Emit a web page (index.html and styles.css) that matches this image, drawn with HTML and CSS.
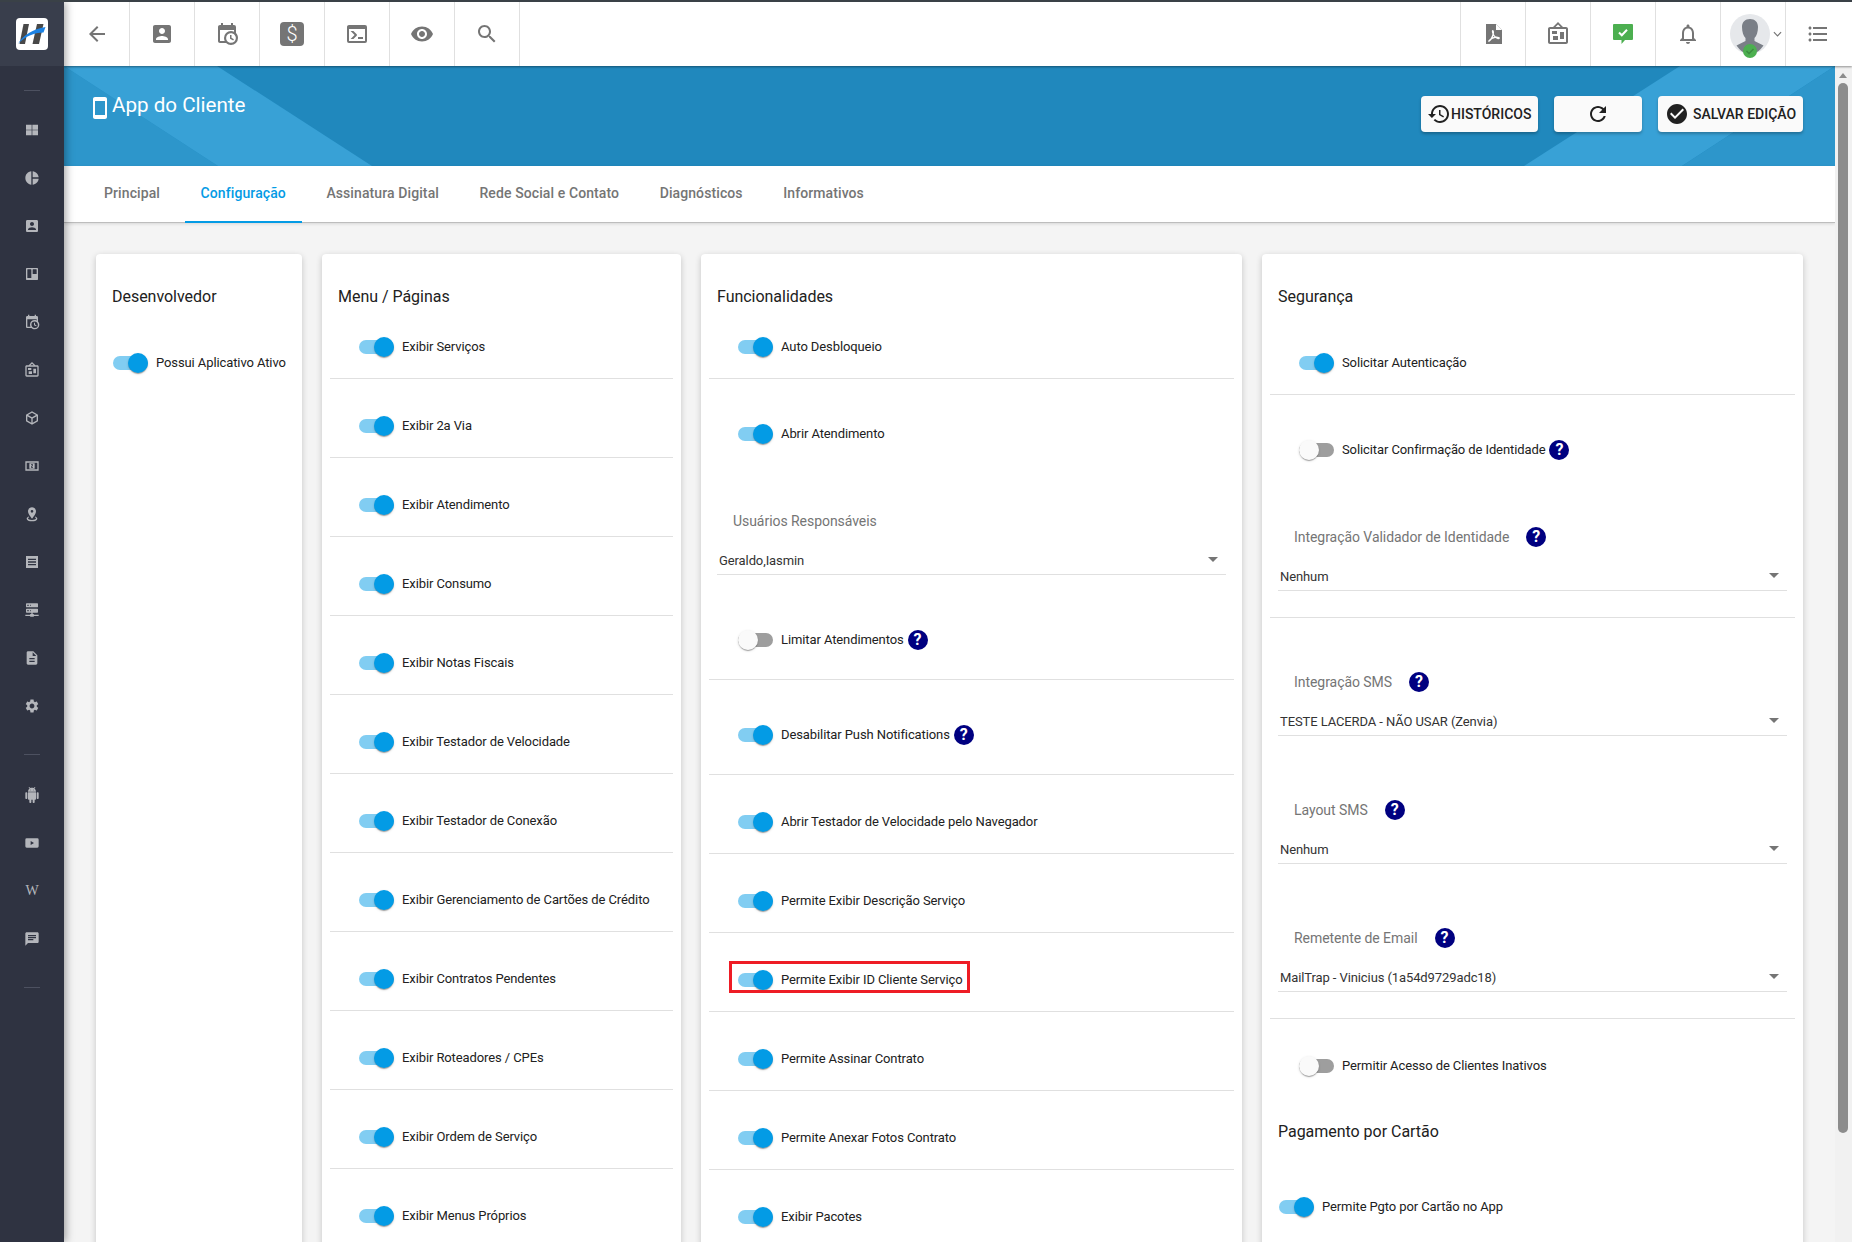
FILE: index.html
```html
<!DOCTYPE html>
<html lang="pt-BR">

<head>
  <meta charset="UTF-8">
  <meta name="viewport" content="width=device-width, initial-scale=1.0">
  <title>App do Cliente</title>
  <link rel="stylesheet" href="styles.css">
</head>

<body>
  <svg class="sprite" xmlns="http://www.w3.org/2000/svg">
    <symbol id="i-back" viewBox="0 0 24 24"><path d="M20 11H7.83l5.59-5.59L12 4l-8 8 8 8 1.41-1.41L7.83 13H20v-2z"/></symbol>
    <symbol id="i-account" viewBox="0 0 24 24"><path d="M3 5v14c0 1.1.89 2 2 2h14c1.1 0 2-.9 2-2V5c0-1.1-.9-2-2-2H5c-1.11 0-2 .9-2 2zm12 4c0 1.66-1.34 3-3 3s-3-1.34-3-3 1.34-3 3-3 3 1.34 3 3zm-9 8c0-2 4-3.1 6-3.1s6 1.1 6 3.1v1H6v-1z"/></symbol>
    <symbol id="i-calendar" viewBox="0 0 24 24"><path d="M15,13H16.5V15.82L18.94,17.23L18.19,18.53L15,16.69V13M19,8H5V19H9.67C9.24,18.09 9,17.07 9,16A7,7 0 0,1 16,9C17.07,9 18.09,9.24 19,9.67V8M5,21C3.89,21 3,20.1 3,19V5C3,3.89 3.89,3 5,3H6V1H8V3H16V1H18V3H19A2,2 0 0,1 21,5V11.1C22.24,12.36 23,14.09 23,16A7,7 0 0,1 16,23C14.09,23 12.36,22.24 11.1,21H5M16,11.15A4.85,4.85 0 0,0 11.15,16C11.15,18.68 13.32,20.85 16,20.85A4.85,4.85 0 0,0 20.85,16C20.85,13.32 18.68,11.15 16,11.15Z"/></symbol>
    <symbol id="i-console" viewBox="0 0 24 24"><path d="M20,19V7H4V19H20M20,3A2,2 0 0,1 22,5V19A2,2 0 0,1 20,21H4A2,2 0 0,1 2,19V5C2,3.89 2.9,3 4,3H20M13,17V15H18V17H13M9.58,13L5.57,9H8.4L11.7,12.3C12.09,12.69 12.09,13.33 11.7,13.72L8.42,17H5.59L9.58,13Z"/></symbol>
    <symbol id="i-eye" viewBox="0 0 24 24"><path d="M12 4.5C7 4.5 2.73 7.61 1 12c1.73 4.39 6 7.5 11 7.5s9.27-3.11 11-7.5c-1.73-4.39-6-7.5-11-7.5zM12 17c-2.76 0-5-2.24-5-5s2.24-5 5-5 5 2.24 5 5-2.24 5-5 5zm0-8c-1.66 0-3 1.34-3 3s1.34 3 3 3 3-1.34 3-3-1.34-3-3-3z"/></symbol>
    <symbol id="i-search" viewBox="0 0 24 24"><path d="M15.5 14h-.79l-.28-.27C15.41 12.59 16 11.11 16 9.5 16 5.91 13.09 3 9.5 3S3 5.91 3 9.5 5.91 16 9.5 16c1.61 0 3.09-.59 4.23-1.57l.27.28v.79l5 4.99L20.49 19l-4.99-5zm-6 0C7.01 14 5 11.99 5 9.5S7.01 5 9.5 5 14 7.01 14 9.5 11.99 14 9.5 14z"/></symbol>
    <symbol id="i-board" viewBox="0 0 24 24"><path d="M12.04 2.5L9.53 5H14.53L12.04 2.5M4 7V20H20V7H4M12 0L17 5V5H20C21.1 5 22 5.89 22 7V20C22 21.1 21.1 22 20 22H4C2.89 22 2 21.1 2 20V7C2 5.89 2.89 5 4 5H7V5L12 0M7 18V14H12V18H7M14 17V10H18V17H14M6 12V9H11V12H6Z"/></symbol>
    <symbol id="i-bell" viewBox="0 0 24 24"><path d="M12 22c1.1 0 2-.9 2-2h-4c0 1.1.9 2 2 2zm6-6v-5c0-3.07-1.63-5.64-4.5-6.32V4c0-.83-.67-1.5-1.5-1.5s-1.5.67-1.5 1.5v.68C7.64 5.36 6 7.92 6 11v5l-2 2v1h16v-1l-2-2zm-2 1H8v-6c0-2.48 1.51-4.5 4-4.5s4 2.02 4 4.5v6z"/></symbol>
    <symbol id="i-list" viewBox="0 0 24 24"><path d="M4 10.5c-.83 0-1.5.67-1.5 1.5s.67 1.5 1.5 1.5 1.5-.67 1.5-1.5-.67-1.5-1.5-1.5zm0-6c-.83 0-1.5.67-1.5 1.5S3.17 7.5 4 7.5 5.5 6.83 5.5 6 4.83 4.5 4 4.5zm0 12c-.83 0-1.5.68-1.5 1.5s.68 1.5 1.5 1.5 1.5-.68 1.5-1.5-.67-1.5-1.5-1.5zM7 19h14v-2H7v2zm0-6h14v-2H7v2zm0-8v2h14V5H7z"/></symbol>
    <symbol id="i-phone" viewBox="0 0 24 24"><path d="M17 1.01L7 1c-1.1 0-2 .9-2 2v18c0 1.1.9 2 2 2h10c1.1 0 2-.9 2-2V3c0-1.1-.9-1.99-2-1.99zM17 19H7V5h10v14z"/></symbol>
    <symbol id="i-history" viewBox="0 0 24 24"><path d="M13 3c-4.97 0-9 4.03-9 9H1l3.89 3.89.07.14L9 12H6c0-3.87 3.13-7 7-7s7 3.13 7 7-3.13 7-7 7c-1.93 0-3.68-.79-4.94-2.06l-1.42 1.42C8.27 19.99 10.51 21 13 21c4.97 0 9-4.03 9-9s-4.03-9-9-9zm-1 5v5l4.28 2.54.72-1.21-3.5-2.08V8H12z"/></symbol>
    <symbol id="i-refresh" viewBox="0 0 24 24"><path d="M17.65 6.35C16.2 4.9 14.21 4 12 4c-4.42 0-7.99 3.58-7.99 8s3.57 8 7.99 8c3.73 0 6.84-2.55 7.73-6h-2.08c-.82 2.33-3.04 4-5.65 4-3.31 0-6-2.69-6-6s2.69-6 6-6c1.66 0 3.14.69 4.22 1.78L13 11h7V4l-2.35 2.35z"/></symbol>
    <symbol id="i-check" viewBox="0 0 24 24"><path d="M12 2C6.48 2 2 6.48 2 12s4.48 10 10 10 10-4.48 10-10S17.52 2 12 2zm-2 15l-5-5 1.41-1.41L10 14.17l7.59-7.59L19 8l-9 9z"/></symbol>
    <symbol id="i-grid" viewBox="0 0 24 24"><path d="M3 4h8.5v7.5H3zM12.500 4H21v7.500h-8.500zM3 12.500h8.500V20H3zM12.500 12.500H21V20h-8.500z"/></symbol>
    <symbol id="i-pie" viewBox="0 0 24 24"><path d="M11,2V22C5.9,21.5 2,17.2 2,12C2,6.8 5.9,2.5 11,2M13,2V11H22C21.5,6.2 17.8,2.5 13,2M13,13V22C17.7,21.5 21.5,17.8 22,13H13Z"/></symbol>
    <symbol id="i-trello" viewBox="0 0 24 24"><path d="M4,3H20A1,1 0 0,1 21,4V20A1,1 0 0,1 20,21H4A1,1 0 0,1 3,20V4A1,1 0 0,1 4,3M5.5,5A0.5,0.5 0 0,0 5,5.5V17.5A0.5,0.5 0 0,0 5.5,18H10.5A0.5,0.5 0 0,0 11,17.5V5.5A0.5,0.5 0 0,0 10.5,5H5.5M13.5,5A0.5,0.5 0 0,0 13,5.5V11.5A0.5,0.5 0 0,0 13.5,12H18.5A0.5,0.5 0 0,0 19,11.5V5.5A0.5,0.5 0 0,0 18.5,5H13.5Z"/></symbol>
    <symbol id="i-cube" viewBox="0 0 24 24"><path d="M21,16.5C21,16.88 20.79,17.21 20.47,17.38L12.57,21.82C12.41,21.94 12.21,22 12,22C11.79,22 11.59,21.94 11.43,21.82L3.53,17.38C3.21,17.21 3,16.88 3,16.5V7.5C3,7.12 3.21,6.79 3.53,6.62L11.43,2.18C11.59,2.06 11.79,2 12,2C12.21,2 12.41,2.06 12.57,2.18L20.47,6.62C20.79,6.79 21,7.12 21,7.5V16.5M12,4.15L6.04,7.5L12,10.85L17.96,7.5L12,4.15M5,15.91L11,19.29V12.58L5,9.21V15.91M19,15.91V9.21L13,12.58V19.29L19,15.91Z"/></symbol>
    <symbol id="i-cash" viewBox="0 0 24 24"><path fill-rule="evenodd" d="M2 5h20v14H2zM4 7v10h16V7z"/><path fill-rule="evenodd" d="M8 8h8v8H8zM10.500 9.500v1h2v1h-2v3h3v-1h-2v-1h2v-3z"/></symbol>
    <symbol id="i-marker" viewBox="0 0 24 24"><path d="M12,2C15.31,2 18,4.66 18,7.95C18,12.41 12,19 12,19C12,19 6,12.41 6,7.95C6,4.66 8.69,2 12,2M12,6A2,2 0 0,0 10,8A2,2 0 0,0 12,10A2,2 0 0,0 14,8A2,2 0 0,0 12,6M20,19C20,21.21 16.42,23 12,23C7.58,23 4,21.21 4,19C4,17.71 5.22,16.56 7.11,15.83L7.75,16.74C6.67,17.19 6,17.81 6,18.5C6,19.88 8.69,21 12,21C15.31,21 18,19.88 18,18.5C18,17.81 17.33,17.19 16.25,16.74L16.89,15.83C18.78,16.56 20,17.71 20,19Z"/></symbol>
    <symbol id="i-article" viewBox="0 0 24 24"><path fill-rule="evenodd" d="M3 3h18v18H3zM6 7v2h12V7zM6 11v2h12v-2zM6 15v2h12v-2z"/></symbol>
    <symbol id="i-server" viewBox="0 0 24 24"><path d="M13,18H14A1,1 0 0,1 15,19H22V21H15A1,1 0 0,1 14,22H10A1,1 0 0,1 9,21H2V19H9A1,1 0 0,1 10,18H11V16H4A1,1 0 0,1 3,15V11A1,1 0 0,1 4,10H20A1,1 0 0,1 21,11V15A1,1 0 0,1 20,16H13V18M4,2H20A1,1 0 0,1 21,3V7A1,1 0 0,1 20,8H4A1,1 0 0,1 3,7V3A1,1 0 0,1 4,2M9,6H10V4H9V6M9,14H10V12H9V14M5,4V6H7V4H5M5,12V14H7V12H5Z"/></symbol>
    <symbol id="i-file" viewBox="0 0 24 24"><path d="M14 2H6c-1.1 0-1.99.9-1.99 2L4 20c0 1.1.89 2 1.99 2H18c1.1 0 2-.9 2-2V8l-6-6zm2 16H8v-2h8v2zm0-4H8v-2h8v2zm-3-5V3.500L18.500 9H13z"/></symbol>
    <symbol id="i-gear" viewBox="0 0 24 24"><path d="M19.14 12.94c.04-.3.06-.61.06-.94 0-.32-.02-.64-.07-.94l2.03-1.58c.18-.14.23-.41.12-.61l-1.92-3.32c-.12-.22-.37-.29-.59-.22l-2.39.96c-.5-.38-1.03-.7-1.62-.94l-.36-2.54c-.04-.24-.24-.41-.48-.41h-3.84c-.24 0-.43.17-.47.41l-.36 2.54c-.59.24-1.13.57-1.62.94l-2.39-.96c-.22-.08-.47 0-.59.22L2.74 8.87c-.12.21-.08.47.12.61l2.03 1.58c-.05.3-.09.63-.09.94s.02.64.07.94l-2.03 1.58c-.18.14-.23.41-.12.61l1.92 3.32c.12.22.37.29.59.22l2.39-.96c.5.38 1.03.7 1.62.94l.36 2.54c.05.24.24.41.48.41h3.84c.24 0 .44-.17.47-.41l.36-2.54c.59-.24 1.13-.56 1.62-.94l2.39.96c.22.08.47 0 .59-.22l1.92-3.32c.12-.22.07-.47-.12-.61l-2.01-1.58zM12 15.600c-1.98 0-3.6-1.62-3.6-3.6s1.62-3.6 3.6-3.6 3.6 1.62 3.6 3.6-1.62 3.6-3.6 3.6z"/></symbol>
    <symbol id="i-android" viewBox="0 0 24 24"><path d="M6 18c0 .55.45 1 1 1h1v3.500c0 .83.67 1.500 1.500 1.500s1.500-.67 1.500-1.500V19h2v3.500c0 .83.67 1.500 1.500 1.500s1.500-.67 1.500-1.500V19h1c.55 0 1-.45 1-1V8H6v10zM3.500 8C2.670 8 2 8.670 2 9.500v7c0 .83.67 1.500 1.500 1.500S5 17.330 5 16.500v-7C5 8.670 4.330 8 3.500 8zm17 0c-.83 0-1.500.67-1.500 1.500v7c0 .83.67 1.500 1.500 1.500s1.500-.67 1.500-1.500v-7c0-.83-.67-1.500-1.500-1.500zm-4.970-5.840l1.300-1.300c.2-.2.2-.51 0-.71-.2-.2-.51-.2-.71 0l-1.480 1.480C13.850 1.230 12.950 1 12 1c-.96 0-1.860.23-2.660.63L7.850.15c-.2-.2-.51-.2-.71 0-.2.2-.2.51 0 .71l1.310 1.310C6.970 3.260 6 5.010 6 7h12c0-1.990-.97-3.750-2.470-4.840zM10 5H9V4h1v1zm5 0h-1V4h1v1z"/></symbol>
    <symbol id="i-video" viewBox="0 0 24 24"><path fill-rule="evenodd" d="M4 5h16a2 2 0 0 1 2 2v10a2 2 0 0 1-2 2H4a2 2 0 0 1-2-2V7a2 2 0 0 1 2-2zM10 9v6l5-3z"/></symbol>
    <symbol id="i-message" viewBox="0 0 24 24"><path d="M20 2H4c-1.100 0-1.990.9-1.990 2L2 22l4-4h14c1.100 0 2-.9 2-2V4c0-1.100-.9-2-2-2zM6 9h12v2H6V9zm8 5H6v-2h8v2zm4-6H6V6h12v2z"/></symbol>
  </svg>

  <div class="app">
    <aside class="sidebar">
      <div class="brand">
        <svg class="logo" viewBox="0 0 32 32">
          <rect width="32" height="32" rx="4" fill="#fff"/>
          <path d="M7.500 6H13L9 26H3.500z" fill="#484848"/>
          <path d="M21 6h6.500L23 26h-6.500z" fill="#484848"/>
          <path d="M2 26C7 17 17 11 29.500 9L27.500 14.500C18 14.500 9 18.500 2 26z" fill="#1b82e4"/>
        </svg>
      </div>
      <div class="side-line"></div>
      <nav class="side-nav">
        <a class="side-item"><svg class="side-icon"><use href="#i-grid"/></svg></a>
        <a class="side-item"><svg class="side-icon"><use href="#i-pie"/></svg></a>
        <a class="side-item"><svg class="side-icon"><use href="#i-account"/></svg></a>
        <a class="side-item"><svg class="side-icon"><use href="#i-trello"/></svg></a>
        <a class="side-item"><svg class="side-icon"><use href="#i-calendar"/></svg></a>
        <a class="side-item"><svg class="side-icon"><use href="#i-board"/></svg></a>
        <a class="side-item"><svg class="side-icon"><use href="#i-cube"/></svg></a>
        <a class="side-item"><svg class="side-icon"><use href="#i-cash"/></svg></a>
        <a class="side-item"><svg class="side-icon"><use href="#i-marker"/></svg></a>
        <a class="side-item"><svg class="side-icon"><use href="#i-article"/></svg></a>
        <a class="side-item"><svg class="side-icon"><use href="#i-server"/></svg></a>
        <a class="side-item"><svg class="side-icon"><use href="#i-file"/></svg></a>
        <a class="side-item"><svg class="side-icon"><use href="#i-gear"/></svg></a>
      </nav>
      <div class="side-line"></div>
      <nav class="side-nav">
        <a class="side-item"><svg class="side-icon"><use href="#i-android"/></svg></a>
        <a class="side-item"><svg class="side-icon"><use href="#i-video"/></svg></a>
        <a class="side-item"><span class="side-w">W</span></a>
        <a class="side-item"><svg class="side-icon"><use href="#i-message"/></svg></a>
      </nav>
      <div class="side-line"></div>
    </aside>

    <div class="main">
      <header class="topbar">
        <div class="tools">
          <a class="tool"><svg class="tool-icon"><use href="#i-back"/></svg></a>
          <a class="tool"><svg class="tool-icon"><use href="#i-account"/></svg></a>
          <a class="tool"><svg class="tool-icon"><use href="#i-calendar"/></svg></a>
          <a class="tool"><span class="money">$</span></a>
          <a class="tool"><svg class="tool-icon"><use href="#i-console"/></svg></a>
          <a class="tool"><svg class="tool-icon"><use href="#i-eye"/></svg></a>
          <a class="tool"><svg class="tool-icon"><use href="#i-search"/></svg></a>
        </div>
        <div class="tools tools-right">
          <a class="tool">
            <svg class="tool-icon" viewBox="0 0 24 24">
              <path d="M5 2h10l6 6v14H5z"/>
              <path d="M15 2l6 6h-6z" fill="#fff"/>
              <path d="M7.500 19.500c2.500-1.500 4-4.500 4.700-7.500.4-2 0-3.500-.5-3.300-.6.3 0 3 1.600 5.300 1.300 1.800 3.200 2.800 4.700 2.300.8-.4-.8-1.400-3.200-1.100-2.600.3-5.300 1.800-7.300 4.300z" fill="none" stroke="#fff" stroke-width="1.300"/>
            </svg>
          </a>
          <a class="tool"><svg class="tool-icon"><use href="#i-board"/></svg></a>
          <a class="tool">
            <svg class="tool-icon" viewBox="0 0 24 24">
              <path d="M3 2h18a1 1 0 0 1 1 1v14a1 1 0 0 1-1 1h-7l-3.500 4v-4H3a1 1 0 0 1-1-1V3a1 1 0 0 1 1-1z" fill="#4caf50"/>
              <path d="M8 10.500l2.800 2.800 5.200-5.600" fill="none" stroke="#fff" stroke-width="2"/>
            </svg>
          </a>
          <a class="tool"><svg class="tool-icon"><use href="#i-bell"/></svg></a>
          <a class="tool tool-user">
            <svg class="avatar" viewBox="0 0 40 46">
              <circle cx="20" cy="20" r="20" fill="#e6e8eb"/>
              <path d="M20 5c5 0 8 3 8 8 0 5-1.500 9-3.500 11v3l9 4.500C30 36.500 25.500 40 20 40s-10-3.500-13.500-8.500l9-4.500v-3C13.500 22 12 18 12 13c0-5 3-8 8-8z" fill="#7a7f87"/>
              <circle cx="20" cy="37" r="7" fill="#4caf50"/>
              <path d="M16.500 37l2.500 2.500 4.500-4.500" fill="none" stroke="#3d8c41" stroke-width="1.500"/>
            </svg>
            <svg class="chevron" viewBox="0 0 10 6"><path d="M1 1l4 4 4-4" fill="none" stroke="#757575" stroke-width="1.300"/></svg>
          </a>
          <a class="tool tool-last"><svg class="tool-icon"><use href="#i-list"/></svg></a>
        </div>
      </header>

      <div class="body">
        <div class="page">
          <section class="hero">
            <svg class="hero-bg" viewBox="0 0 1771 100" preserveAspectRatio="none">
              <path d="M0 0L154 100H0z" fill="#2d96cb"/>
              <path d="M0 0H153L308 100H154z" fill="#38a1d6"/>
              <path d="M1460 100L1616 0H1771L1618 100z" fill="#38a1d6"/>
              <path d="M1618 100L1771 0V100z" fill="#2d96cb"/>
            </svg>
            <h1 class="hero-title"><svg class="phone"><use href="#i-phone"/></svg>App do Cliente</h1>
            <div class="hero-actions">
              <button class="btn btn-history"><svg class="btn-icon"><use href="#i-history"/></svg>HISTÓRICOS</button>
              <button class="btn btn-refresh"><svg class="btn-icon"><use href="#i-refresh"/></svg></button>
              <button class="btn btn-save"><svg class="btn-icon"><use href="#i-check"/></svg>SALVAR EDIÇÃO</button>
            </div>
          </section>

          <nav class="tabs">
            <a class="tab">Principal</a>
            <a class="tab active">Configuração</a>
            <a class="tab">Assinatura Digital</a>
            <a class="tab">Rede Social e Contato</a>
            <a class="tab">Diagnósticos</a>
            <a class="tab">Informativos</a>
          </nav>

          <main class="content">
            <section class="card">
              <h2 class="card-title">Desenvolvedor</h2>
              <div class="row row-top row-wide plain">
                <label class="switch"><span class="toggle on"></span>Possui Aplicativo Ativo</label>
              </div>
            </section>

            <section class="card">
              <h2 class="card-title">Menu / Páginas</h2>
              <div class="row row-first"><label class="switch"><span class="toggle on"></span>Exibir Serviços</label></div>
              <div class="row"><label class="switch"><span class="toggle on"></span>Exibir 2a Via</label></div>
              <div class="row"><label class="switch"><span class="toggle on"></span>Exibir Atendimento</label></div>
              <div class="row"><label class="switch"><span class="toggle on"></span>Exibir Consumo</label></div>
              <div class="row"><label class="switch"><span class="toggle on"></span>Exibir Notas Fiscais</label></div>
              <div class="row"><label class="switch"><span class="toggle on"></span>Exibir Testador de Velocidade</label></div>
              <div class="row"><label class="switch"><span class="toggle on"></span>Exibir Testador de Conexão</label></div>
              <div class="row"><label class="switch"><span class="toggle on"></span>Exibir Gerenciamento de Cartões de Crédito</label></div>
              <div class="row"><label class="switch"><span class="toggle on"></span>Exibir Contratos Pendentes</label></div>
              <div class="row"><label class="switch"><span class="toggle on"></span>Exibir Roteadores / CPEs</label></div>
              <div class="row"><label class="switch"><span class="toggle on"></span>Exibir Ordem de Serviço</label></div>
              <div class="row"><label class="switch"><span class="toggle on"></span>Exibir Menus Próprios</label></div>
            </section>

            <section class="card">
              <h2 class="card-title">Funcionalidades</h2>
              <div class="row row-first"><label class="switch"><span class="toggle on"></span>Auto Desbloqueio</label></div>
              <div class="row row-tall plain"><label class="switch"><span class="toggle on"></span>Abrir Atendimento</label></div>
              <div class="field field-plain">
                <div class="field-label">Usuários Responsáveis</div>
                <div class="select">Geraldo,Iasmin</div>
              </div>
              <div class="row row-tall row-after-field"><label class="switch"><span class="toggle"></span>Limitar Atendimentos<span class="help">?</span></label></div>
              <div class="row row-tall"><label class="switch"><span class="toggle on"></span>Desabilitar Push Notifications<span class="help">?</span></label></div>
              <div class="row"><label class="switch"><span class="toggle on"></span>Abrir Testador de Velocidade pelo Navegador</label></div>
              <div class="row"><label class="switch"><span class="toggle on"></span>Permite Exibir Descrição Serviço</label></div>
              <div class="row"><label class="switch marked"><span class="toggle on"></span>Permite Exibir ID Cliente Serviço</label></div>
              <div class="row"><label class="switch"><span class="toggle on"></span>Permite Assinar Contrato</label></div>
              <div class="row"><label class="switch"><span class="toggle on"></span>Permite Anexar Fotos Contrato</label></div>
              <div class="row"><label class="switch"><span class="toggle on"></span>Exibir Pacotes</label></div>
            </section>

            <section class="card">
              <h2 class="card-title">Segurança</h2>
              <div class="row row-top"><label class="switch"><span class="toggle on"></span>Solicitar Autenticação</label></div>
              <div class="row row-tall plain"><label class="switch"><span class="toggle"></span>Solicitar Confirmação de Identidade<span class="help">?</span></label></div>
              <div class="field">
                <div class="field-label">Integração Validador de Identidade<span class="help">?</span></div>
                <div class="select">Nenhum</div>
              </div>
              <div class="field field-plain field-sms">
                <div class="field-label">Integração SMS<span class="help">?</span></div>
                <div class="select">TESTE LACERDA - NÃO USAR (Zenvia)</div>
              </div>
              <div class="field field-plain field-next">
                <div class="field-label">Layout SMS<span class="help">?</span></div>
                <div class="select">Nenhum</div>
              </div>
              <div class="field field-next">
                <div class="field-label">Remetente de Email<span class="help">?</span></div>
                <div class="select">MailTrap - Vinicius (1a54d9729adc18)</div>
              </div>
              <div class="row plain"><label class="switch"><span class="toggle"></span>Permitir Acesso de Clientes Inativos</label></div>
              <h2 class="card-title card-subtitle">Pagamento por Cartão</h2>
              <div class="row row-wide row-pay plain"><label class="switch"><span class="toggle on"></span>Permite Pgto por Cartão no App</label></div>
            </section>
          </main>
        </div>

        <div class="scrollbar">
          <span class="scroll-up"></span>
          <span class="scroll-thumb"></span>
        </div>
      </div>
    </div>
  </div>
</body>

</html>
```

FILE: styles.css
```css
* {
  box-sizing: border-box;
  margin: 0;
  padding: 0;
}

html,
body {
  height: 100%;
  overflow: hidden;
}

body {
  border-top: 2px solid #3a4147;
  font-family: Roboto, "Liberation Sans", sans-serif;
  font-size: 13px;
  color: #212121;
  background-color: #f4f4f4;
}

.sprite {
  display: none;
}

.app {
  display: flex;
  height: 100%;
}

/* sidebar */
.sidebar {
  flex: 0 0 64px;
  display: flex;
  flex-direction: column;
  align-items: center;
  background-color: #2f3341;
  box-shadow: 2px 0 8px rgba(0, 0, 0, .35);
  position: relative;
  z-index: 3;
}

.brand {
  width: 100%;
  height: 64px;
  flex: none;
  display: flex;
  align-items: center;
  justify-content: center;
  background-color: #393e4c;
}

.logo {
  width: 32px;
  height: 32px;
}

.side-line {
  width: 16px;
  height: 1px;
  flex: none;
  margin: 24px 0 16px;
  background-color: #4d5160;
}

.brand + .side-line {
  margin-bottom: 15px;
}

.side-nav {
  width: 100%;
}

.side-item {
  height: 48px;
  display: flex;
  align-items: center;
  justify-content: center;
}

.side-icon {
  width: 16px;
  height: 16px;
  fill: #b4b6bb;
}

.side-w {
  font-family: "Liberation Serif", serif;
  font-size: 14px;
  font-weight: 400;
  color: #b4b6bb;
}

/* top bar */
.main {
  flex: 1;
  min-width: 0;
  display: flex;
  flex-direction: column;
}

.topbar {
  height: 64px;
  flex: none;
  display: flex;
  justify-content: space-between;
  background-color: #fff;
  box-shadow: 0 1px 2px rgba(0, 0, 0, .4);
  position: relative;
  z-index: 2;
}

.tools {
  display: flex;
  padding-left: 1px;
}

.tools-right {
  padding-left: 0;
  border-left: 1px solid #e0e0e0;
}

.tool {
  width: 65px;
  display: flex;
  align-items: center;
  justify-content: center;
  border-right: 1px solid #e0e0e0;
}

.tool-last {
  width: 66px;
  padding-right: 2px;
  border-right: 0;
}

.tool-icon {
  width: 24px;
  height: 24px;
  fill: #757575;
}

.money {
  width: 24px;
  height: 24px;
  border-radius: 4px;
  background-color: #757575;
  color: #fff;
  font-size: 20px;
  font-weight: 300;
  line-height: 24px;
  text-align: center;
}

.tool-user {
  justify-content: flex-start;
  padding-left: 9px;
  gap: 3px;
}

.avatar {
  width: 40px;
  height: 46px;
  margin-top: 6px;
  flex: none;
}

.chevron {
  width: 9px;
  height: 6px;
  flex: none;
}

/* page */
.body {
  flex: 1;
  min-height: 0;
  display: flex;
}

.page {
  flex: 1;
  min-width: 0;
  overflow: hidden;
}

.scrollbar {
  flex: 0 0 17px;
  padding: 7px 4px 0 3px;
  display: flex;
  flex-direction: column;
  align-items: center;
  background-color: #f1f1f1;
}

.scroll-up {
  width: 0;
  height: 0;
  border-left: 4px solid transparent;
  border-right: 4px solid transparent;
  border-bottom: 5px solid #8c8c8c;
}

.scroll-thumb {
  width: 10px;
  height: 1050px;
  margin-top: 5px;
  border-radius: 5px;
  background-color: #8c8c8c;
}

.hero {
  height: 100px;
  padding: 0 32px 0 29px;
  display: flex;
  justify-content: space-between;
  background-color: #2088bd;
  color: #fff;
  position: relative;
}

.hero-bg {
  position: absolute;
  left: 0;
  top: 0;
  width: 100%;
  height: 100%;
}

.hero-title {
  display: flex;
  align-items: center;
  align-self: flex-start;
  margin-top: 26px;
  height: 26px;
  font-size: 20.6px;
  font-weight: 400;
  position: relative;
}

.phone {
  width: 24px;
  height: 24px;
  margin: 6px 0 0 -5px;
  fill: #fff;
}

.hero-actions {
  display: flex;
  gap: 16px;
  margin-top: 30px;
  position: relative;
}

.btn {
  height: 36px;
  display: flex;
  align-items: center;
  border: 0;
  border-radius: 4px;
  background-color: #fafafa;
  color: #212121;
  font-family: inherit;
  font-size: 14px;
  font-weight: 500;
  box-shadow: 0 2px 3px rgba(0, 0, 0, .25);
}

.btn-icon {
  width: 24px;
  height: 24px;
  fill: #212121;
  flex: none;
}

.btn-history {
  width: 117px;
  padding-left: 6px;
}

.btn-refresh {
  width: 88px;
  justify-content: center;
}

.btn-save {
  width: 145px;
  padding-left: 7px;
  gap: 4px;
}

.tabs {
  height: 57px;
  padding-left: 24px;
  display: flex;
  gap: 8.5px;
  background-color: #fff;
  border-bottom: 1px solid #bdbdbd;
  box-shadow: 0 1px 3px rgba(0, 0, 0, .12);
  position: relative;
}

.tab {
  padding: 0 16px 1px;
  display: flex;
  align-items: center;
  font-size: 14px;
  font-weight: 500;
  letter-spacing: .1px;
  color: #757575;
  margin-bottom: -1px;
  border-bottom: 2px solid transparent;
}

.tab.active {
  color: #039be5;
  border-bottom-color: #039be5;
}

/* cards */
.content {
  display: grid;
  grid-template-columns: 206px 359px 541px 541px;
  gap: 20px;
  align-items: start;
  padding: 31px 32px 0;
}

.card {
  height: 1100px;
  padding-top: 33px;
  border-radius: 4px;
  background-color: #fff;
  box-shadow: 0 2px 6px rgba(0, 0, 0, .2);
}

.card-title {
  padding-left: 16px;
  font-size: 16px;
  font-weight: 400;
  line-height: 20px;
  letter-spacing: -.03px;
  color: #212121;
}

.card-subtitle {
  padding-top: 25px;
}

.row {
  display: flex;
  margin: 0 8px;
  padding: 37px 0 21px 29px;
  border-bottom: 1px solid #e0e0e0;
}

.row-first {
  padding-top: 30px;
}

.row-top {
  padding-top: 46px;
}

.row-tall {
  padding-top: 45px;
  padding-bottom: 29px;
}

.row-after-field {
  padding-top: 55px;
}

.row-wide {
  padding-left: 9px;
}

.row-pay {
  padding-top: 55px;
}

.plain {
  border-bottom: 0;
}

.switch {
  display: flex;
  align-items: center;
  gap: 8px;
  height: 20px;
  line-height: 20px;
  letter-spacing: -.1px;
  color: #212121;
  position: relative;
}

.marked::after {
  content: "";
  position: absolute;
  left: -9px;
  right: -8px;
  top: -9px;
  bottom: -3px;
  border: 3px solid #ee1c25;
}

.toggle {
  width: 35px;
  height: 14px;
  flex: none;
  border-radius: 7px;
  background-color: #9e9e9e;
  position: relative;
}

.toggle::after {
  content: "";
  width: 20px;
  height: 20px;
  border-radius: 50%;
  background-color: #fafafa;
  box-shadow: 0 2px 1px -1px rgba(0, 0, 0, .2), 0 1px 1px 0 rgba(0, 0, 0, .14), 0 1px 3px 0 rgba(0, 0, 0, .12);
  position: absolute;
  left: 0;
  top: -3px;
}

.toggle.on {
  background-color: #81cdf2;
}

.toggle.on::after {
  left: 15px;
  background-color: #039be5;
}

.help {
  width: 20px;
  height: 20px;
  flex: none;
  margin-left: -4px;
  border-radius: 50%;
  background-color: #000080;
  color: #fff;
  font-size: 16px;
  font-weight: 700;
  line-height: 20px;
  letter-spacing: 0;
  text-align: center;
}

.field {
  margin: 0 8px;
  padding: 38px 8px 26px;
  border-bottom: 1px solid #e0e0e0;
}

.field-plain {
  padding-bottom: 0;
  border-bottom: 0;
}

.field-sms {
  padding-top: 54px;
}

.field-next {
  padding-top: 64px;
}

.field-label {
  height: 20px;
  padding-left: 16px;
  display: flex;
  align-items: center;
  font-size: 14px;
  line-height: 20px;
  letter-spacing: -.05px;
  color: #757575;
}

.field-label .help {
  margin-left: 17px;
}

.select {
  height: 29px;
  margin-top: 15px;
  padding: 0 8px 0 2px;
  display: flex;
  align-items: center;
  justify-content: space-between;
  border-bottom: 1px solid #e0e0e0;
  letter-spacing: -.1px;
  color: #333;
}

.select::after {
  content: "";
  width: 0;
  height: 0;
  margin-top: -1px;
  border-left: 5px solid transparent;
  border-right: 5px solid transparent;
  border-top: 5px solid #757575;
}
```
